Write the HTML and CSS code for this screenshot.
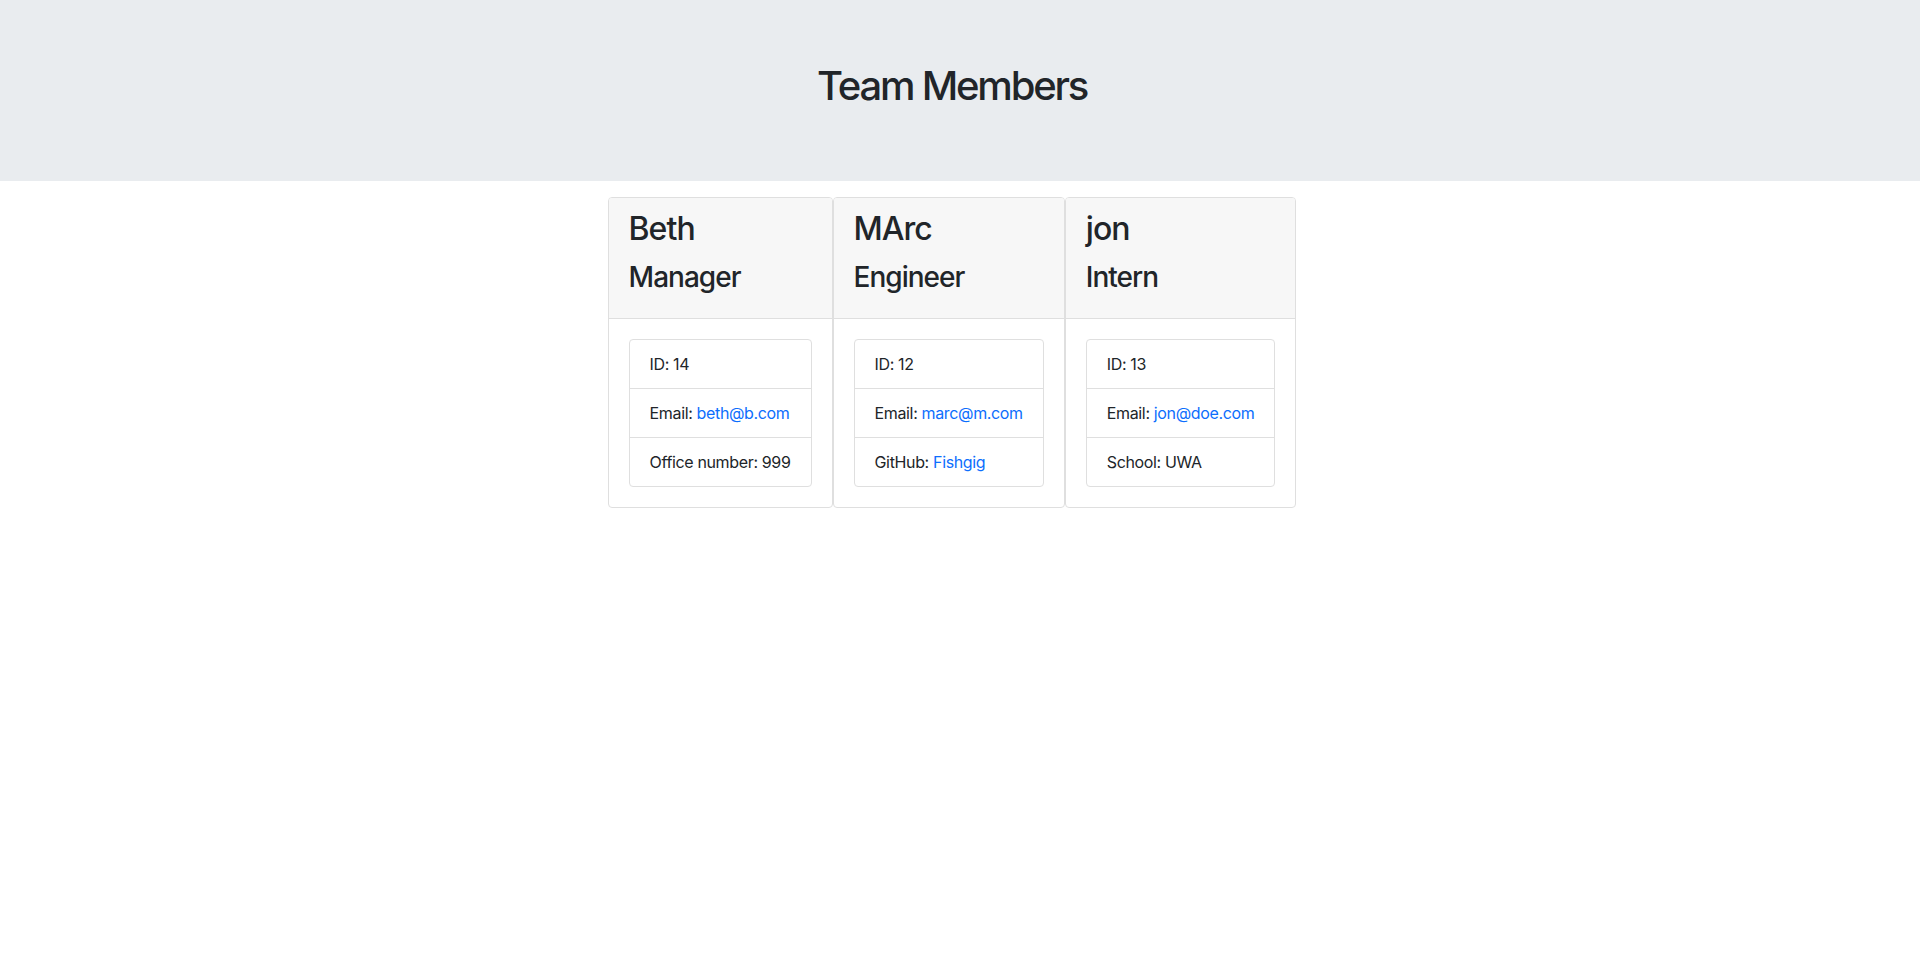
FILE: index.html
```html
<!DOCTYPE html>
<html lang="en">
<head>
<meta charset="utf-8">
<title>Team Members</title>
<link rel="stylesheet" href="styles.css">
</head>
<body>
<header class="banner">
  <h1 class="banner-title">Team Members</h1>
</header>
<main class="team">
  <section class="card">
    <div class="card-header">
      <h2 class="card-name">Beth</h2>
      <h3 class="card-role">Manager</h3>
    </div>
    <div class="card-body">
      <ul class="info-list">
        <li class="info-item">ID: 14</li>
        <li class="info-item">Email: <a class="info-link" href="mailto:beth@b.com">beth@b.com</a></li>
        <li class="info-item">Office number: 999</li>
      </ul>
    </div>
  </section>
  <section class="card">
    <div class="card-header">
      <h2 class="card-name">MArc</h2>
      <h3 class="card-role">Engineer</h3>
    </div>
    <div class="card-body">
      <ul class="info-list">
        <li class="info-item">ID: 12</li>
        <li class="info-item">Email: <a class="info-link" href="mailto:marc@m.com">marc@m.com</a></li>
        <li class="info-item">GitHub: <a class="info-link" href="#">Fishgig</a></li>
      </ul>
    </div>
  </section>
  <section class="card">
    <div class="card-header">
      <h2 class="card-name">jon</h2>
      <h3 class="card-role">Intern</h3>
    </div>
    <div class="card-body">
      <ul class="info-list">
        <li class="info-item">ID: 13</li>
        <li class="info-item">Email: <a class="info-link" href="mailto:jon@doe.com">jon@doe.com</a></li>
        <li class="info-item">School: UWA</li>
      </ul>
    </div>
  </section>
</main>
</body>
</html>
```

FILE: styles.css
```css
* { box-sizing: border-box; }

html, body {
  margin: 0;
  padding: 0;
  background: #ffffff;
}

body {
  font-family: Inter, "Noto Sans", "Liberation Sans", sans-serif;
  font-size: 16px;
  line-height: 24px;
  color: #212529;
}

.banner {
  background: #e9ecef;
  height: 181px;
  padding: 62px 16px 0 0;
  display: flex;
  justify-content: center;
}

.banner-title {
  margin: 0;
  font-size: 40px;
  line-height: 48px;
  font-weight: 500;
  letter-spacing: -0.055em;
}

.team {
  display: flex;
  justify-content: center;
  align-items: flex-start;
  padding: 16px 16px 0 0;
}

.card {
  border: 1px solid #dfdfdf;
  border-radius: 4px;
  background: #fff;
  display: flex;
  flex-direction: column;
}

.card-header {
  background: #f7f7f7;
  border-bottom: 1px solid #dfdfdf;
  padding: 12px 20px;
  border-radius: 3px 3px 0 0;
}

.card-name {
  margin: 0 0 12px;
  font-size: 32px;
  line-height: 38px;
  font-weight: 500;
  letter-spacing: -0.03em;
}

.card-role {
  margin: 0 0 12px;
  font-size: 28px;
  line-height: 34px;
  font-weight: 500;
  letter-spacing: -0.035em;
}

.card-body {
  padding: 20px;
}

.info-list {
  list-style: none;
  margin: 0;
  padding: 0;
  border: 1px solid #dfdfdf;
  border-radius: 4px;
}

.info-item {
  padding: 12px 20px;
  white-space: nowrap;
  letter-spacing: -0.35px;
}

.info-item + .info-item {
  border-top: 1px solid #dfdfdf;
}

.info-link {
  color: #0d6efd;
  text-decoration: none;
}
```
